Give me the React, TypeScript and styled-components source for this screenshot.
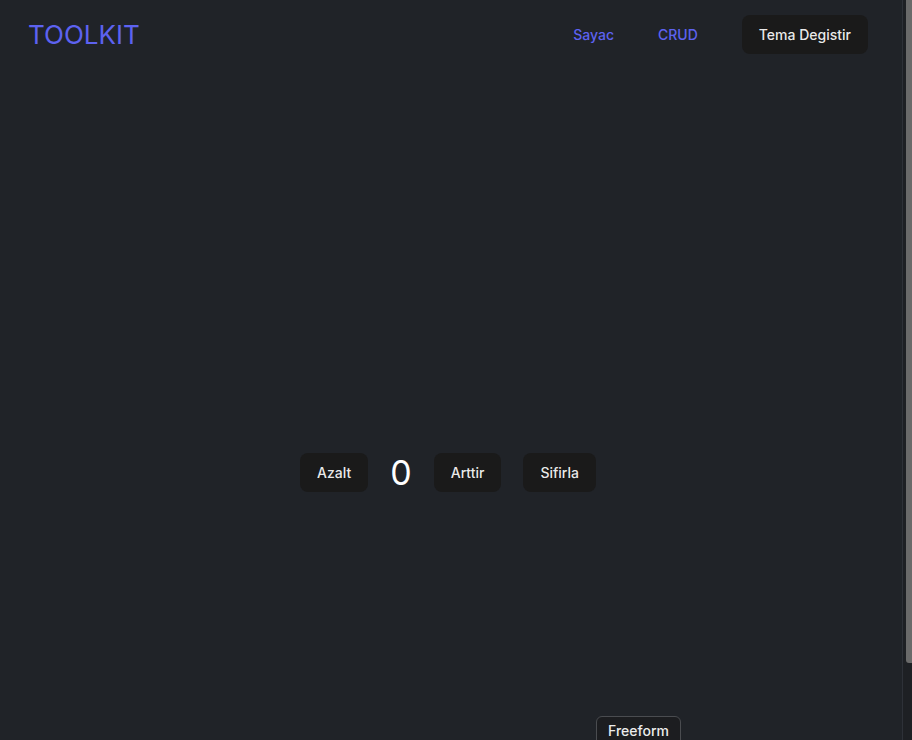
import React, { useState } from "react";
import styled, { createGlobalStyle } from "styled-components";

const GlobalStyle = createGlobalStyle`
  html, body {
    margin: 0;
    padding: 0;
    background: #202328;
    color: rgba(255, 255, 255, 0.87);
    font-family: Inter, "Noto Sans", "Liberation Sans", sans-serif;
    -webkit-font-smoothing: antialiased;
  }
  ::-webkit-scrollbar {
    width: 0;
  }
`;

const Page = styled.div`
  display: flex;
  flex-direction: column;
  min-height: 826px;
  padding-right: 10px;
`;

const Header = styled.header`
  height: 68px;
  display: flex;
  align-items: center;
  justify-content: space-between;
  padding: 0 34px 0 28px;
  box-sizing: border-box;
`;

const Logo = styled.h1`
  margin: 0;
  font-size: 26px;
  font-weight: 400;
  color: #5d62f0;
`;

const Nav = styled.nav`
  display: flex;
  align-items: center;
  gap: 44px;
`;

const NavLink = styled.a`
  font-size: 14px;
  font-weight: 500;
  color: #5d62f0;
  text-decoration: none;
  cursor: pointer;
`;

const Button = styled.button`
  font-family: inherit;
  font-size: 14px;
  font-weight: 500;
  color: rgba(255, 255, 255, 0.92);
  background: #1a1a1a;
  border: 1px solid transparent;
  border-radius: 8px;
  padding: 0 16px;
  height: 39px;
  cursor: pointer;
`;

const Main = styled.main`
  flex: 1;
  display: flex;
  align-items: center;
  justify-content: center;
  padding: 50px 6px 0 0;
`;

const Counter = styled.div`
  display: flex;
  align-items: center;
  gap: 22px;
`;

const Count = styled.span`
  font-size: 34px;
  font-weight: 400;
  color: #ffffff;
  min-width: 18px;
  text-align: center;
`;

const Freeform = styled.div`
  position: fixed;
  left: 596px;
  top: 716px;
  width: 85px;
  height: 30px;
  box-sizing: border-box;
  border: 1px solid #4a4c50;
  border-radius: 6px;
  background: #1c1d20;
  color: #ececec;
  font-size: 14px;
  font-weight: 500;
  display: flex;
  justify-content: center;
  padding-top: 5px;
`;

const ScrollTrack = styled.div`
  position: fixed;
  top: 0;
  right: 0;
  width: 10px;
  height: 100vh;
  background: #1e2024;
  border-left: 1px solid #2e3138;
  box-sizing: border-box;
`;

const ScrollThumb = styled.div`
  position: absolute;
  top: 0;
  right: 0;
  width: 6px;
  height: 663px;
  background: #6a6a6a;
  border-radius: 0 0 0 3px;
`;

export default function App() {
  const [count, setCount] = useState(0);
  return (
    <>
      <GlobalStyle />
      <Page>
        <Header>
          <Logo>TOOLKIT</Logo>
          <Nav>
            <NavLink>Sayac</NavLink>
            <NavLink>CRUD</NavLink>
            <Button>Tema Degistir</Button>
          </Nav>
        </Header>
        <Main>
          <Counter>
            <Button onClick={() => setCount(count - 1)}>Azalt</Button>
            <Count>{count}</Count>
            <Button onClick={() => setCount(count + 1)}>Arttir</Button>
            <Button onClick={() => setCount(0)}>Sifirla</Button>
          </Counter>
        </Main>
      </Page>
      <Freeform>Freeform</Freeform>
      <ScrollTrack>
        <ScrollThumb />
      </ScrollTrack>
    </>
  );
}
